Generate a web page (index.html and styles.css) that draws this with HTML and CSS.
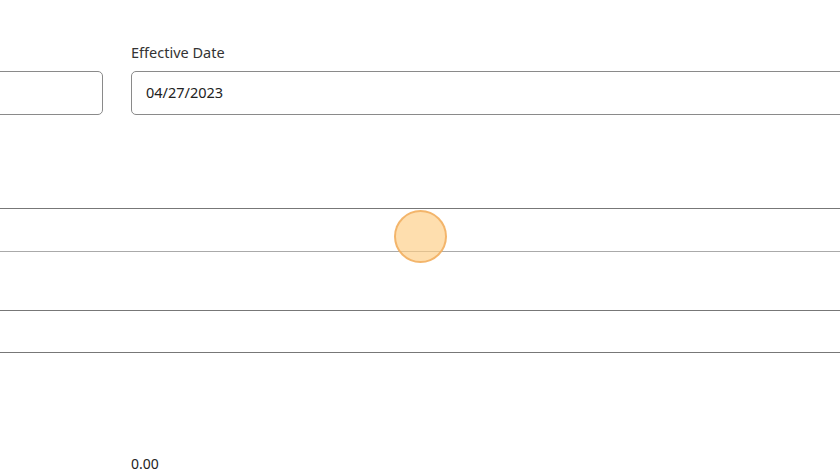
FILE: index.html
```html
<!DOCTYPE html>
<html lang="en">
<head>
    <meta charset="UTF-8">
    <meta name="viewport" content="width=device-width, initial-scale=1.0">
    <title>Effective Date</title>
    <link rel="stylesheet" href="styles.css">
</head>
<body>
    <div class="page">
        <div class="form-row">
            <div class="form-group">
                <label>&nbsp;</label>
                <div class="field"></div>
            </div>
            <div class="form-group">
                <label>Effective Date</label>
                <div class="field">04/27/2023</div>
            </div>
        </div>

        <div class="table">
            <div class="row first"></div>
            <div class="row tall"></div>
            <div class="row"></div>
        </div>

        <div class="total">0.00</div>
    </div>

    <div class="cursor"></div>
</body>
</html>
```

FILE: styles.css
```css
* {
    margin: 0;
    padding: 0;
    box-sizing: border-box;
}

html, body {
    width: 840px;
    height: 473px;
    overflow: hidden;
}

body {
    font-family: 'Noto Sans', 'Open Sans', sans-serif;
    background: #fff;
    color: #222;
    position: relative;
}

.page {
    width: 840px;
}

.form-row {
    display: grid;
    grid-template-columns: 300px 900px;
    column-gap: 28px;
    margin-left: -197px;
    padding-top: 43px;
}

.form-group label {
    display: block;
    font-size: 14.5px;
    line-height: 18px;
    color: #333;
    margin-bottom: 10px;
}

.field {
    height: 44px;
    border: 1px solid #8a8a8a;
    border-radius: 5px;
    padding: 0 14px;
    font-size: 14.5px;
    line-height: 41px;
    color: #222;
}

.table {
    margin-top: 93px;
}

.row {
    height: 42px;
    border-bottom: 1px solid #777;
}

.row.first {
    height: 44px;
    border-top: 1px solid #777;
    border-bottom-color: #aaa;
}

.row.tall {
    height: 59px;
}

.total {
    margin-top: 102px;
    margin-left: 131px;
    font-size: 14px;
    line-height: 18px;
    color: #222;
}

.cursor {
    position: absolute;
    left: 394px;
    top: 210px;
    width: 53px;
    height: 53px;
    border-radius: 50%;
    background: rgba(253, 205, 130, 0.65);
    border: 2px solid rgba(240, 170, 90, 0.8);
}
```
